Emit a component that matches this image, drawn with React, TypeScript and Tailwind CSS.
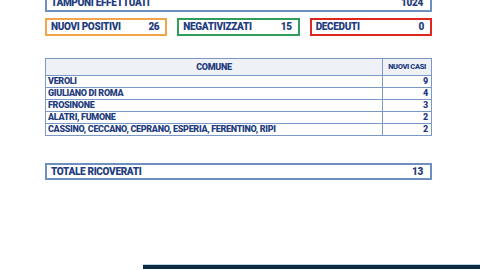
const rows: [string, number][] = [
  ['VEROLI', 9],
  ['GIULIANO DI ROMA', 4],
  ['FROSINONE', 3],
  ['ALATRI, FUMONE', 2],
  ['CASSINO, CECCANO, CEPRANO, ESPERIA, FERENTINO, RIPI', 2],
]

function StatBox({ label, value, color }: { label: string; value: string; color: string }) {
  return (
    <div className={`flex h-[18px] items-center justify-between border-2 pl-[4px] pr-[6px] ${color}`}>
      <span>{label}</span>
      <span>{value}</span>
    </div>
  )
}

export default function App() {
  return (
    <div className="relative h-[270px] w-[480px] overflow-hidden bg-white font-['Roboto',sans-serif] font-black tracking-[-0.02em] text-[#1f3d80]">
      <div className="ml-[45px] w-[387px] text-[10px] leading-none">
        <div className="-mt-[6px] flex h-[18px] items-center justify-between border-2 border-[#6f8fc0] pl-[4px] pr-[7px]">
          <span>TAMPONI EFFETTUATI</span>
          <span>1024</span>
        </div>

        <div className="mt-[6px] grid grid-cols-3 gap-[10px]">
          <StatBox label="NUOVI POSITIVI" value="26" color="border-[#f2a54a]" />
          <StatBox label="NEGATIVIZZATI" value="15" color="border-[#2f9e5c]" />
          <StatBox label="DECEDUTI" value="0" color="border-[#e0261e]" />
        </div>

        <table className="mt-[22px] w-full border-collapse border border-[#7a98c6] text-[9px]">
          <thead>
            <tr className="h-[17px] bg-[#eef1f6]">
              <th className="border border-[#7a98c6] text-center text-[9px] font-black">COMUNE</th>
              <th className="w-[49px] border border-[#7a98c6] text-center text-[7.5px] font-black tracking-[-0.05em]">NUOVI CASI</th>
            </tr>
          </thead>
          <tbody>
            {rows.map(([name, n]) => (
              <tr key={name} className="h-[12px]">
                <td className="border border-[#7a98c6] pl-[2px] text-left">{name}</td>
                <td className="border border-[#7a98c6] pr-[3px] text-right">{n}</td>
              </tr>
            ))}
          </tbody>
        </table>

        <div className="mt-[27px] flex h-[17px] items-center justify-between border-2 border-[#6f8fc0] pl-[4px] pr-[7px]">
          <span>TOTALE RICOVERATI</span>
          <span>13</span>
        </div>
      </div>

      <div className="mt-[84px] ml-[143px] h-[5px] border-t border-[#b8d4e8] bg-[#0e2a3e]" />
    </div>
  )
}
